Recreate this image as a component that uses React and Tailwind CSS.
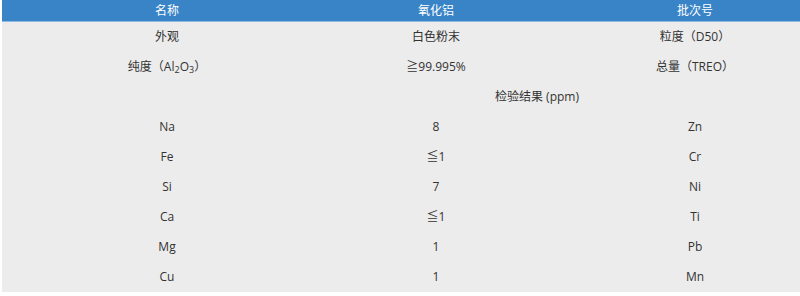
const rows = [
  ["Na", "8", "Zn"],
  ["Fe", "≦1", "Cr"],
  ["Si", "7", "Ni"],
  ["Ca", "≦1", "Ti"],
  ["Mg", "1", "Pb"],
  ["Cu", "1", "Mn"],
];

const font = { fontFamily: '"Open Sans", "Noto Sans CJK SC", sans-serif' };

function Row({ cells, className = "" }) {
  return (
    <div className={`grid grid-cols-[330px_208px_310px_222px] h-[30px] items-center text-[12px] text-[#333] ${className}`}>
      {cells.map((c, i) => (
        <div key={i} className="text-center leading-none">{c}</div>
      ))}
    </div>
  );
}

export default function App() {
  return (
    <div className="w-[800px] h-[296px] bg-white overflow-hidden" style={font}>
      <div className="ml-[2px] w-[1070px]">
        <div className="grid grid-cols-[330px_208px_310px_222px] h-[21px] items-center bg-[#3884c6] text-white text-[12px] border-b border-[#8dbbe3] box-content">
          <div className="text-center">名称</div>
          <div className="text-center">氧化铝</div>
          <div className="text-center">批次号</div>
          <div />
        </div>
        <div className="bg-[#ececec]">
          <Row cells={["外观", "白色粉末", "粒度（D50）", ""]} />
          <Row
            cells={[
              <span>
                纯度（Al<sub className="text-[9px]">2</sub>O<sub className="text-[9px]">3</sub>）
              </span>,
              "≧99.995%",
              "总量（TREO）",
              "",
            ]}
          />
          <div className="h-[30px] flex items-center justify-center text-[12px] text-[#333]">检验结果 (ppm)</div>
          {rows.map((r) => (
            <Row key={r[0]} cells={[...r, ""]} />
          ))}
        </div>
      </div>
    </div>
  );
}
